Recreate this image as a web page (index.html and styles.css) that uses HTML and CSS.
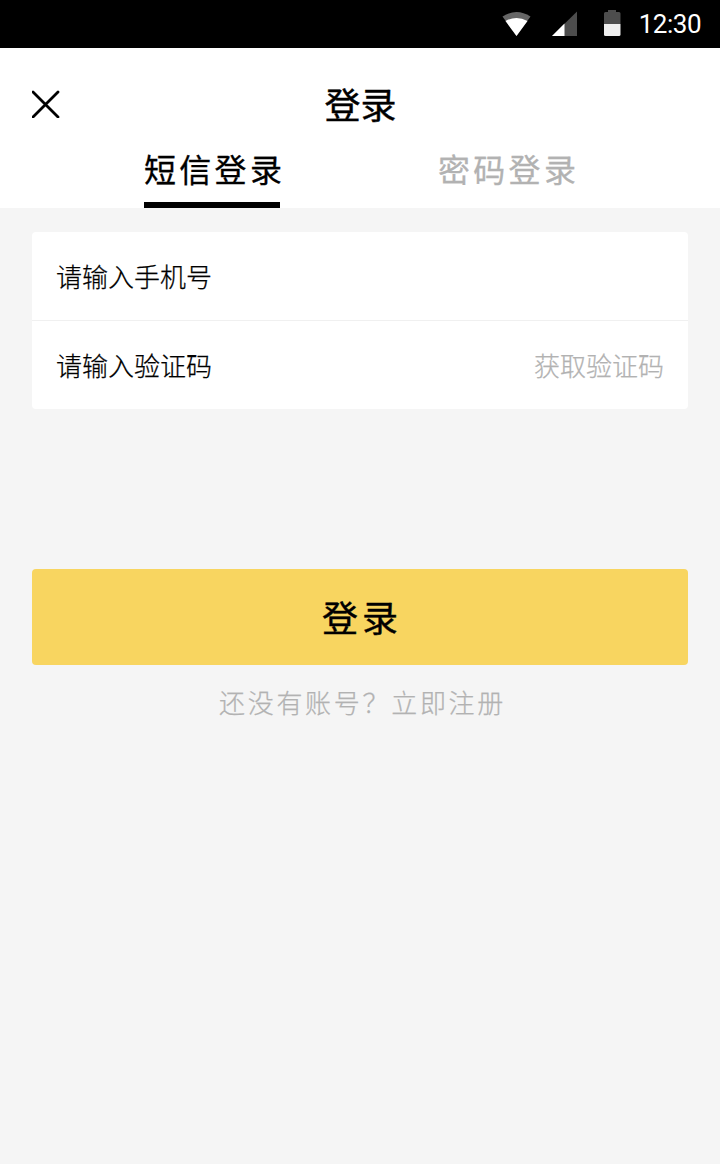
FILE: index.html
```html
<!DOCTYPE html>
<html lang="zh-CN">
<head>
<meta charset="utf-8">
<title>登录</title>
<link rel="stylesheet" href="styles.css">
</head>
<body>
<div class="status">
  <svg class="status-icons" width="124" height="48" viewBox="0 0 124 48">
    <path fill="#666" d="M5.500 16.500Q19.500 7.500 33.500 16.500L19.500 36Z"/>
    <path fill="#fff" d="M8.500 21Q19.500 15 30.500 21L19.500 36Z"/>
    <path fill="#4d4d4d" d="M80 11.500V36H55Z"/>
    <path fill="#fff" d="M67.500 23.500V36H55Z"/>
    <path fill="#4d4d4d" d="M107 13.500Q107 12 108.500 12H111V10H119V12H122Q123.500 12 123.500 13.500V24H107Z"/>
    <path fill="#eee" d="M107 24H123.500V34.500Q123.500 36 122 36H108.500Q107 36 107 34.500Z"/>
  </svg>
  <span class="clock">12:30</span>
</div>
<header class="header">
  <div class="titlebar">
    <svg class="close" width="28" height="28" viewBox="0 0 28 28"><path d="M1 2L26 27M26 2L1 27" stroke="#000" stroke-width="2.800" stroke-linecap="round"/></svg>
    <h1 class="title">登录</h1>
  </div>
  <nav class="tabs">
    <a class="tab tab-active">短信登录</a>
    <a class="tab tab-password">密码登录</a>
  </nav>
</header>
<main class="main">
  <div class="card">
    <div class="row"><span>请输入手机号</span></div>
    <div class="row row-code"><span>请输入验证码</span><span class="get-code">获取验证码</span></div>
  </div>
  <button class="submit">登录</button>
  <p class="register">还没有账号？立即注册</p>
</main>
</body>
</html>
```
FILE: styles.css
```css
* { box-sizing: border-box; }
body { margin: 0; min-height: 1164px; background: #f5f5f5; color: #000; font-family: "Noto Sans CJK SC", sans-serif; }
.status { height: 48px; background: #000; color: #fff; display: flex; justify-content: flex-end; align-items: center; padding-right: 19px; }
.status-icons { margin-right: 18px; }
.clock { font: 26px/48px Roboto, sans-serif; letter-spacing: -0.500px; }
.header { height: 160px; background: #fff; }
.titlebar { height: 100px; display: grid; grid-template-columns: 28px 1fr 28px; align-items: center; padding: 12px 32px 0; }
.title { margin: 0; padding: 0 0 2px 1px; font-size: 36px; line-height: 52px; font-weight: 400; -webkit-text-stroke: 0.400px; text-align: center; }
.tabs { height: 60px; display: flex; justify-content: space-between; padding: 0 146px 0 144px; }
.tab { font-size: 32px; line-height: 40px; font-weight: 400; -webkit-text-stroke: 0.300px; letter-spacing: 3.300px; color: #b2b2b2; white-space: nowrap; width: 136px; height: 60px; }
.tab-active { color: #000; border-bottom: 6px solid #000; }
.main { padding: 24px 32px; }
.card { background: #fff; border-radius: 4px; height: 177px; }
.row { height: 88px; display: flex; align-items: center; justify-content: space-between; padding: 0 24px 2px; font-size: 26px; font-weight: 300; -webkit-text-stroke: 0.250px; }
.row-code { height: 89px; border-top: 1px solid #f0f0f0; }
.get-code { color: #b2b2b2; }
.submit { display: block; width: 100%; height: 96px; margin-top: 160px; padding: 0 0 2px 4px; border: 0; border-radius: 4px; background: #f8d560; color: #000; font: 400 36px/94px "Noto Sans CJK SC", sans-serif; -webkit-text-stroke: 0.400px; letter-spacing: 4px; }
.register { margin: 17px 0 0; padding-left: 5px; font-size: 26px; font-weight: 300; -webkit-text-stroke: 0.250px; line-height: 40px; letter-spacing: 2.700px; color: #b2b2b2; text-align: center; }
```
